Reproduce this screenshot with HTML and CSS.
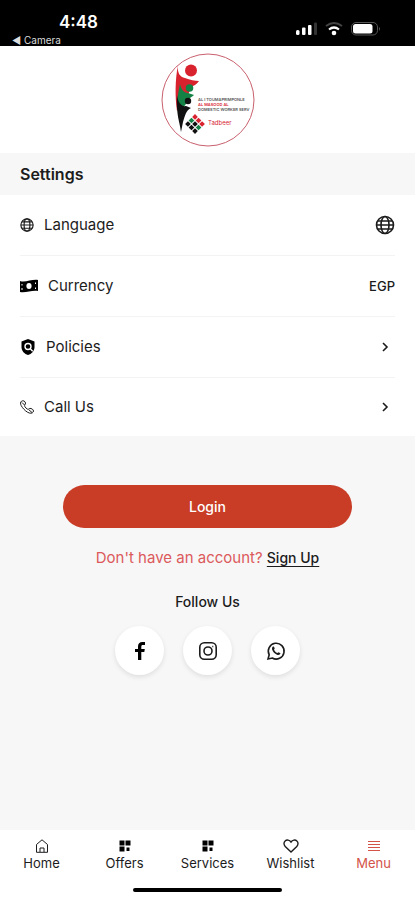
FILE: index.html
```
<!DOCTYPE html>
<html lang="en">
<head>
    <meta charset="UTF-8">
    <meta name="viewport" content="width=device-width, initial-scale=1.0">
    <title>Settings</title>
    <link rel="stylesheet" href="styles.css">
</head>
<body>
    <!-- Status bar -->
    <div class="status-bar">
        <div class="status-left">
            <span class="time">4:48</span>
            <span class="back-app">◀ Camera</span>
        </div>
        <svg class="status-icons" width="86" height="16" viewBox="0 0 86 16">
            <g fill="#fff">
                <rect x="1" y="9" width="3.500" height="5" rx="1.500"/>
                <rect x="7" y="6.500" width="3.500" height="7.500" rx="1"/>
                <rect x="13" y="4" width="3.500" height="10" rx="1"/>
                <rect x="19" y="1.500" width="3" height="12.500" rx="1" fill="#333"/>
                <circle cx="39" cy="12" r="2.300"/>
            </g>
            <path d="M31 5Q39-1 47 5" fill="none" stroke="#444" stroke-width="2"/>
            <path d="M34 8.500Q39 4.500 44 8.500" fill="none" stroke="#fff" stroke-width="2.200"/>
            <rect x="56.500" y="1.500" width="26" height="12.500" rx="4.500" fill="none" stroke="#555"/>
            <rect x="58" y="3" width="19.500" height="9.500" rx="2.500" fill="#fff"/>
            <path d="M84 6q2 1.500 0 4z" fill="#555"/>
        </svg>
    </div>

    <header class="header">
        <svg class="logo" width="94" height="94" viewBox="0 0 94 94" role="img" aria-label="Tadbeer">
            <circle cx="47" cy="47" r="46" fill="#fff" stroke="#c9606e"/>
            <circle cx="30" cy="17.500" r="6" fill="#d8232f"/>
            <path d="M17 12C16 20 19 24 24 25C29 27 34 28 38 28C35 33 31 32 29 36L26 47L16 58C14 44 14 27 17 12Z" fill="#d8232f"/>
            <circle cx="28.500" cy="35" r="3.800" fill="#148244"/>
            <path d="M19 31C20 36 23 40 27 40L33 42C30 45 27 45 25 51L18 60C15 49 17 41 19 31Z" fill="#148244"/>
            <circle cx="27" cy="48" r="3.200" fill="#111"/>
            <path d="M16 42C17 50 21 54 25 53L30 55C25 57 24 63 22 69L20 79C19 69 15 63 16 42Z" fill="#111"/>
            <g transform="translate(34 71) rotate(45)">
                <g fill="#d8232f"><rect x="-7" y="-7" width="4" height="4"/><rect x="-2" y="-7" width="4" height="4"/><rect x="3" y="-7" width="4" height="4"/></g>
                <g fill="#148244"><rect x="-7" y="-2" width="4" height="4"/><rect x="3" y="-2" width="4" height="4"/></g>
                <g fill="#111"><rect x="-2" y="-2" width="4" height="4"/><rect x="-7" y="3" width="4" height="4"/><rect x="-2" y="3" width="4" height="4"/><rect x="3" y="3" width="4" height="4"/></g>
            </g>
            <text class="logo-line" x="37" y="48">AL I TOUMAPRIMPONLE</text>
            <text class="logo-line logo-red" x="37" y="53">AL MASOOD AL</text>
            <text class="logo-line" x="37" y="58">DOMESTIC WORKER SERV</text>
            <text class="logo-name" x="47" y="72">Tadbeer</text>
        </svg>
    </header>

    <main class="content">
        <h1 class="title">Settings</h1>
        <ul class="settings">
            <li>
                <a href="#" class="row">
                    <svg width="14" height="14" viewBox="0 0 24 24" class="line-icon"><circle cx="12" cy="12" r="10.500"/><ellipse cx="12" cy="12" rx="5" ry="10.500"/><path d="M1.500 12h21M3.500 6.500h17M3.500 17.500h17"/></svg>
                    <span class="label">Language</span>
                    <svg width="20" height="20" viewBox="0 0 20 20" class="globe"><circle cx="10" cy="10" r="8.500"/><ellipse cx="10" cy="10" rx="4" ry="8.500"/><path d="M1.500 10h17M3 6h14M3 14h14"/></svg>
                </a>
            </li>
            <li>
                <a href="#" class="row">
                    <svg width="18" height="14" viewBox="0 0 18 14"><path d="M0 2C5 4 12 0 18 1V12C12 11 6 14 0 13Z"/><ellipse cx="9" cy="7" rx="2.600" ry="3" fill="#fff"/><path d="M2 5v1.500M2 9v2M15.500 3.500v1.500M15.500 8.500v1.500" stroke="#fff"/></svg>
                    <span class="label">Currency</span>
                    <span class="value">EGP</span>
                </a>
            </li>
            <li>
                <a href="#" class="row">
                    <svg width="16" height="16" viewBox="0 0 16 16"><path d="M8 0L14.500 2.500V8C14.500 12 11.500 15 8 16C4.500 15 1.500 12 1.500 8V2.500Z"/><circle cx="8" cy="7.500" r="3" fill="none" stroke="#fff" stroke-width="1.400"/><path d="M10 9.500l2.700 2.800" stroke="#fff" stroke-width="1.400"/></svg>
                    <span class="label">Policies</span>
                    <svg width="20" height="12" viewBox="0 0 20 12" class="chevron"><path d="M8 2l4 4-4 4"/></svg>
                </a>
            </li>
            <li>
                <a href="#" class="row">
                    <svg width="14" height="14" viewBox="0 0 14 14" class="phone"><path d="M1.500 1.200C3 .2 5.200 1 5.500 3C5.700 4.500 4 5 4.800 6.500C5.500 7.800 6.500 8.700 7.600 9.200C8.800 9.700 9.300 7.800 11 8.500C13.200 9.200 13.900 10.700 13.200 12C12.300 13.500 10 13.700 7.500 12.200C5 10.800 2.500 8 1.200 5.600C.3 3.800.3 2 1.500 1.200ZM2 2.500L4.500 5M8.800 9.700L12 12.500"/></svg>
                    <span class="label">Call Us</span>
                    <svg width="20" height="12" viewBox="0 0 20 12" class="chevron"><path d="M8 2l4 4-4 4"/></svg>
                </a>
            </li>
        </ul>

        <section class="account">
            <button type="button" class="login">Login</button>
            <p class="signup">Don't have an account? <a href="#">Sign Up</a></p>
            <h2 class="follow">Follow Us</h2>
            <div class="social">
                <a href="#" aria-label="Facebook">
                    <svg width="20" height="20" viewBox="0 0 20 20"><path d="M8 19V11H5V8H8V5.500C8 2.500 9.700 1 12.200 1H15V4H13C11.700 4 11.300 4.600 11.300 5.700V8H14.800L14.300 11H11.300V19Z"/></svg>
                </a>
                <a href="#" aria-label="Instagram">
                    <svg width="20" height="20" viewBox="0 0 20 20" class="social-line"><rect x="1.800" y="1.800" width="16.400" height="16.400" rx="4.500"/><circle cx="10" cy="10" r="4"/><path d="M14.300 5.500h1"/></svg>
                </a>
                <a href="#" aria-label="WhatsApp">
                    <svg width="20" height="20" viewBox="0 0 20 20" class="social-line"><path d="M2 18L3.200 13.800A7.900 7.900 0 1 1 6.300 17Z"/><path d="M6.500 6C7.500 5 8 5.500 8.700 7.500L8 8.700C8.800 10.300 9.800 11.300 11.300 12L12.500 11.200L14.500 12.300C14 14 12.500 14.300 11 13.700C8.700 12.800 6.900 11 6.200 8.800C5.900 7.800 6 6.700 6.500 6Z" class="solid"/></svg>
                </a>
            </div>
        </section>
    </main>

    <nav class="bottom-nav">
        <div class="tabs">
            <a href="#">
                <svg width="16" height="14" viewBox="0 0 16 14" class="nav-line"><path d="M2.500 13.300V5.500L8 .8L13.500 5.500V13.300ZM6 13V9H10V13"/></svg>
                Home
            </a>
            <a href="#">
                <svg width="16" height="14" viewBox="0 0 16 14"><path d="M2.500 1.500h5v5h-5zM8.500 1.500h5v5h-5zM2.500 7.500h5v5h-5zM9.500 8.500h3v3.500h-3z"/></svg>
                Offers
            </a>
            <a href="#">
                <svg width="16" height="14" viewBox="0 0 16 14"><path d="M2.500 1.500h5v5h-5zM8.500 1.500h5v5h-5zM2.500 7.500h5v5h-5zM9.500 8.500h3v3.500h-3z"/></svg>
                Services
            </a>
            <a href="#">
                <svg width="16" height="14" viewBox="0 0 16 14" class="nav-line heart"><path d="M8 13L2.200 7.400C.6 5.800.6 3.300 2.100 2C3.800.4 6.500.8 8 3C9.500.8 12.200.4 13.900 2C15.400 3.300 15.400 5.800 13.800 7.400Z"/></svg>
                Wishlist
            </a>
            <a href="#" class="active">
                <svg width="16" height="14" viewBox="0 0 16 14" class="nav-line"><path d="M2 2.500h12M2 5.500h12M2 8.500h12M2 11.500h12"/></svg>
                Menu
            </a>
        </div>
        <div class="home-indicator"></div>
    </nav>
</body>
</html>
```
FILE: styles.css
```
* {
    box-sizing: border-box;
}
body {
    margin: 0;
    min-height: 100vh;
    display: flex;
    flex-direction: column;
    font-family: Inter, "Liberation Sans", sans-serif;
    font-size: 15px;
    line-height: 20px;
    color: #1c1c1c;
    background: #f7f7f7;
}
a {
    color: inherit;
    text-decoration: none;
}
svg {
    display: block;
    flex: none;
}

/* Status bar */
.status-bar {
    display: flex;
    justify-content: space-between;
    align-items: flex-start;
    height: 46px;
    padding: 12px 34px 0 12px;
    background: #000;
    color: #fff;
}
.status-left {
    display: flex;
    flex-direction: column;
}
.time {
    padding-left: 47px;
    font-size: 17px;
    font-weight: 600;
}
.back-app {
    font-size: 10px;
    line-height: 16px;
    color: #ddd;
}
.status-icons {
    margin-top: 9px;
}

/* Logo */
.header {
    display: flex;
    justify-content: center;
    padding: 7px 0 6px;
    background: #fff;
}
.logo-line {
    font-size: 4px;
    font-weight: 600;
    fill: #555;
}
.logo-red {
    fill: #d8232f;
}
.logo-name {
    font-size: 6px;
    fill: #d8232f;
}

/* Settings list */
.content {
    flex: 1;
}
.title {
    margin: 0;
    padding: 11px 20px;
    font-size: 16px;
    font-weight: 600;
}
.settings {
    margin: 0;
    padding: 0 20px;
    list-style: none;
    background: #fff;
}
.row {
    display: flex;
    align-items: center;
    gap: 10px;
    min-height: 61px;
    border-bottom: 1px solid #f3f3f3;
}
li:last-child .row {
    min-height: 58px;
    border-bottom: none;
}
.label {
    flex: 1;
}
.value {
    font-size: 13px;
    font-weight: 500;
}
.line-icon,
.globe,
.chevron,
.phone,
.social-line,
.nav-line {
    fill: none;
    stroke: currentColor;
}
.line-icon {
    stroke-width: 2;
}
.globe,
.chevron,
.social-line {
    stroke-width: 1.6px;
}

/* Login and social links */
.account {
    display: flex;
    flex-direction: column;
    align-items: center;
    padding: 49px 20px 20px;
}
.login {
    width: 77%;
    height: 43px;
    border: none;
    border-radius: 22px;
    background: #c93c26;
    color: #fff;
    font-family: inherit;
    font-size: 14px;
    font-weight: 500;
    cursor: pointer;
}
.signup {
    margin: 20px 0 24px;
    color: #dc5a5c;
}
.signup a {
    font-size: 14px;
    font-weight: 500;
    color: #1c1c1c;
    text-decoration: underline;
    text-underline-offset: 3px;
}
.follow {
    margin: 0 0 14px;
    font-size: 14px;
    font-weight: 500;
}
.social {
    display: flex;
    gap: 19px;
}
.social a {
    display: flex;
    justify-content: center;
    align-items: center;
    width: 49px;
    height: 49px;
    border-radius: 50%;
    background: #fff;
    box-shadow: 0 2px 5px rgba(0, 0, 0, 0.1);
}
.solid {
    fill: currentColor;
    stroke: none;
}

/* Bottom navigation */
.bottom-nav {
    padding: 9px 0 8px;
    background: #fff;
}
.tabs {
    display: flex;
}
.tabs a {
    flex: 1;
    display: flex;
    flex-direction: column;
    align-items: center;
    gap: 1px;
    font-size: 13px;
    line-height: 18px;
}
.heart {
    stroke-width: 1.4px;
}
.tabs .active {
    color: #d35348;
}
.home-indicator {
    width: 36%;
    height: 4px;
    margin: 16px auto 0;
    border-radius: 2px;
    background: #000;
}
```
